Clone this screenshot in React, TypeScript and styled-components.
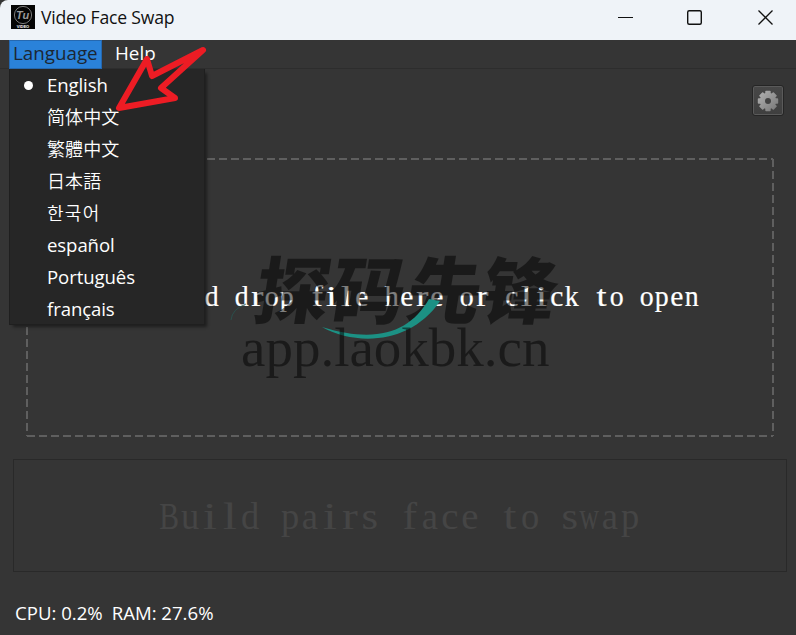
import React from "react";
import styled, { createGlobalStyle } from "styled-components";

const Global = createGlobalStyle`
  html, body { margin: 0; padding: 0; }
  body { background: #353535; }
  * { box-sizing: border-box; }
`;

const ui = `"Open Sans", "Noto Sans CJK SC", sans-serif`;

const Window = styled.div`
  position: relative;
  width: 796px;
  height: 635px;
  overflow: hidden;
  display: flex;
  flex-direction: column;
  background: #353535;
  color: #fff;
  font-family: ${ui};
  font-size: 18.8px;
`;

const TitleBar = styled.header`
  display: flex;
  align-items: center;
  height: 40px;
  padding-left: 11px;
  background: #eff3f8;
  color: #111;
  border-top-left-radius: 8px;
  flex: none;
`;

const Logo = styled.svg`
  width: 24px;
  height: 24px;
  margin: -7px 6px 0 0;
`;

const Title = styled.span`
  font-size: 17.6px;
  line-height: 24px;
  margin-top: -6px;
  letter-spacing: -0.2px;
  flex: 1;
`;

const Controls = styled.svg`
  width: 180px;
  height: 40px;
`;

const MenuBar = styled.nav`
  display: flex;
  height: 29px;
  padding-left: 9px;
  border-bottom: 1px solid #2d2d2d;
  flex: none;
`;

const MenuTitle = styled.div<{ $active?: boolean }>`
  width: ${p => (p.$active ? 93 : 50)}px;
  margin-right: ${p => (p.$active ? 8 : 0)}px;
  padding-left: ${p => (p.$active ? 3 : 4)}px;
  height: 29px;
  line-height: 25px;
  white-space: nowrap;
  border: 1px solid ${p => (p.$active ? "#2568b0" : "transparent")};
  background: ${p => (p.$active ? "#2a82da" : "transparent")};
  color: ${p => (p.$active ? "#1c2733" : "#fff")};
`;

const Menu = styled.ul`
  position: absolute;
  z-index: 4;
  left: 9px;
  top: 69px;
  width: 196px;
  height: 256px;
  margin: 0;
  padding: 0;
  list-style: none;
  background: #262626;
  border: 1px solid #1f1f1f;
  box-shadow: 3px 3px 3px -1px rgba(0, 0, 0, 0.45);
  border-top: 0;
`;

const MenuItem = styled.li`
  display: flex;
  align-items: center;
  height: 32px;
`;

const Bullet = styled.span<{ $on: boolean }>`
  width: 9px;
  height: 9px;
  margin: 1px 14px 0 14px;
  border-radius: 50%;
  background: ${p => (p.$on ? "#fff" : "transparent")};
`;

const ItemText = styled.span<{ $cjk?: string }>`
  font-family: ${p => (p.$cjk ? `"Noto Sans CJK ${p.$cjk}", sans-serif` : ui)};
  font-size: ${p => (p.$cjk ? 18 : 18.6)}px;
  font-weight: ${p => (p.$cjk ? 350 : 400)};
  line-height: 32px;
  margin-top: ${p => (p.$cjk ? -2 : 0)}px;
  letter-spacing: ${p => (p.$cjk === "KR" ? 1.3 : p.$cjk ? 0.1 : -0.1)}px;
`;

const Tools = styled.div`
  display: flex;
  justify-content: flex-end;
  height: 89px;
  padding: 16px 12px 0 0;
  flex: none;
`;

const GearButton = styled.button`
  display: flex;
  align-items: center;
  justify-content: center;
  width: 32px;
  height: 31px;
  padding: 0;
  border: 1px solid #252525;
  border-radius: 3px;
  background: linear-gradient(#474747, #3f3f3f);
  box-shadow: inset 0 0 0 1px #5a5a5a;
`;

const DropZone = styled.section`
  display: flex;
  align-items: center;
  justify-content: flex-end;
  width: 748px;
  height: 279px;
  margin-left: 26px;
  padding: 0 74px 3px 0;
  flex: none;
  background:
    repeating-linear-gradient(90deg, #5f5f5f 0 8px, transparent 8px 12px) 1px 0 / 746px 2px no-repeat,
    repeating-linear-gradient(90deg, #5f5f5f 0 8px, transparent 8px 12px) 1px 100% / 746px 2px no-repeat,
    repeating-linear-gradient(#5f5f5f 0 8px, transparent 8px 12px) 0 1px / 2px 277px no-repeat,
    repeating-linear-gradient(#5f5f5f 0 8px, transparent 8px 12px) 100% 1px / 2px 277px no-repeat;
`;

const MonoLine = styled.p<{ $size: number; $color: string; $stroke: number }>`
  display: flex;
  margin: 0;
  font-family: "Liberation Serif", serif;
  font-size: ${p => p.$size}px;
  line-height: 1;
  color: ${p => p.$color};
  -webkit-text-stroke: ${p => p.$stroke}px ${p => p.$color};
`;

const Cell = styled.span<{ $w: number }>`
  display: flex;
  justify-content: center;
  width: ${p => p.$w}px;
  white-space: pre;
`;

const Glyph = styled.span<{ $sx: number }>`
  transform: translateX(-0.5px) scaleX(${p => p.$sx});
`;

const stretch: Record<string, number> = {
  i: 1.35, l: 1.35, f: 1.15, t: 1.25, r: 1.25, w: 0.72, B: 0.78, c: 1.02, s: 1.12, e: 1.02,
};

function Mono({ text, size, cell, color, stroke = 0 }: {
  text: string; size: number; cell: number; color: string; stroke?: number;
}) {
  return (
    <MonoLine $size={size} $color={color} $stroke={stroke}>
      {[...text].map((c, i) => (
        <Cell key={i} $w={cell}><Glyph $sx={stretch[c] ?? 0.96}>{c}</Glyph></Cell>
      ))}
    </MonoLine>
  );
}

const Watermark = styled.div`
  position: absolute;
  z-index: 2;
  left: 225px;
  top: 245px;
  width: 350px;
  height: 145px;
  color: rgba(0, 0, 0, 0.5);
`;

const Brand = styled.div`
  position: absolute;
  left: 31px;
  top: 4px;
  font: 900 75px/75px "Noto Sans CJK SC", sans-serif;
  letter-spacing: 1px;
  white-space: nowrap;
  transform: skewX(-9deg) scaleY(0.97);
`;

const Domain = styled.div`
  position: absolute;
  left: 16px;
  top: 77px;
  font: 55px/52px "Liberation Serif", serif;
  white-space: nowrap;
`;

const Swoosh = styled.svg`
  position: absolute;
  left: 0;
  top: 0;
`;

const BuildButton = styled.button`
  display: flex;
  align-items: center;
  justify-content: center;
  width: 774px;
  height: 113px;
  margin: 22px 0 0 13px;
  padding: 0;
  flex: none;
  background: #353535;
  border: 1px solid #292929;
`;

const Status = styled.footer`
  display: flex;
  gap: 9px;
  padding: 28px 0 0 15px;
  font-size: 18.6px;
  line-height: 26px;
`;

const Arrow = styled.svg`
  position: absolute;
  z-index: 6;
  left: 105px;
  top: 40px;
`;

const languages: { name: string; cjk?: string }[] = [
  { name: "English" },
  { name: "简体中文", cjk: "SC" },
  { name: "繁體中文", cjk: "TC" },
  { name: "日本語", cjk: "JP" },
  { name: "한국어", cjk: "KR" },
  { name: "español" },
  { name: "Português" },
  { name: "français" },
];

const teeth = [0, 45, 90, 135, 180, 225, 270, 315];

export default function App() {
  return (
    <Window>
      <Global />
      <TitleBar>
        <Logo viewBox="0 0 24 24">
          <rect width="24" height="24" fill="#050505" />
          <circle cx="12" cy="10" r="8.6" fill="none" stroke="#888" strokeWidth="0.9" />
          <text x="11.6" y="14" textAnchor="middle" fontSize="11" fontWeight="bold" fontStyle="italic" fill="#999" fontFamily="Liberation Sans">Tu</text>
          <text x="12" y="23" textAnchor="middle" fontSize="4" fontWeight="bold" fill="#fff" fontFamily="Liberation Sans">VIDEO</text>
        </Logo>
        <Title>Video Face Swap</Title>
        <Controls viewBox="616 0 180 40" fill="none" stroke="#111">
          <path d="M618 17.5h15" />
          <rect x="687.7" y="10.7" width="13.6" height="13.6" rx="1.5" strokeWidth="1.4" />
          <path d="M758.5 10.5l14 14m0-14l-14 14" strokeWidth="1.3" />
        </Controls>
      </TitleBar>
      <MenuBar>
        <MenuTitle $active>Language</MenuTitle>
        <MenuTitle>Help</MenuTitle>
      </MenuBar>
      <Menu>
        {languages.map((l, i) => (
          <MenuItem key={l.name}>
            <Bullet $on={i === 0} />
            <ItemText $cjk={l.cjk}>{l.name}</ItemText>
          </MenuItem>
        ))}
      </Menu>
      <Tools>
        <GearButton aria-label="Settings">
          <svg width="22" height="22" viewBox="-11 -11 22 22">
            <defs>
              <linearGradient id="steel" gradientUnits="userSpaceOnUse" x1="-8" y1="-8" x2="8" y2="8">
                <stop stopColor="#adadad" />
                <stop offset="1" stopColor="#7c7c7c" />
              </linearGradient>
              <mask id="gear">
                <circle r="8.2" fill="#fff" />
                {teeth.map(a => (
                  <rect key={a} x="-2.7" y="-10.2" width="5.4" height="5" rx="0.8" fill="#fff" transform={`rotate(${a})`} />
                ))}
                <circle r="3" fill="#000" />
              </mask>
            </defs>
            <rect x="-11" y="-11" width="22" height="22" fill="url(#steel)" mask="url(#gear)" />
          </svg>
        </GearButton>
      </Tools>
      <DropZone>
        <Mono text="d drop file here or click to open" size={29} cell={15} color="#fff" stroke={0.2} />
      </DropZone>
      <BuildButton>
        <Mono text="Build pairs face to swap" size={38} cell={20} color="#454545" />
      </BuildButton>
      <Status><span>CPU: 0.2%</span><span>RAM: 27.6%</span></Status>
      <Watermark>
        <Brand>探码先锋</Brand>
        <Swoosh width="350" height="145" viewBox="0 0 350 145">
          <path d="M97 82C133 102 187 98 215 56L204 54C185 87 152 99 97 82Z" fill="#1c9184" />
          <path d="M6 75Q7 64 21 59" fill="none" stroke="#285552" strokeWidth="0.8" />
        </Swoosh>
        <Domain>app.laokbk.cn</Domain>
      </Watermark>
      <Arrow width="110" height="75" viewBox="105 40 110 75">
        <path d="M203 50L152 76L147 59L119 108L175 98L161 88Z" fill="none" stroke="#ed1c24" strokeWidth="6" strokeLinejoin="round" />
      </Arrow>
    </Window>
  );
}
